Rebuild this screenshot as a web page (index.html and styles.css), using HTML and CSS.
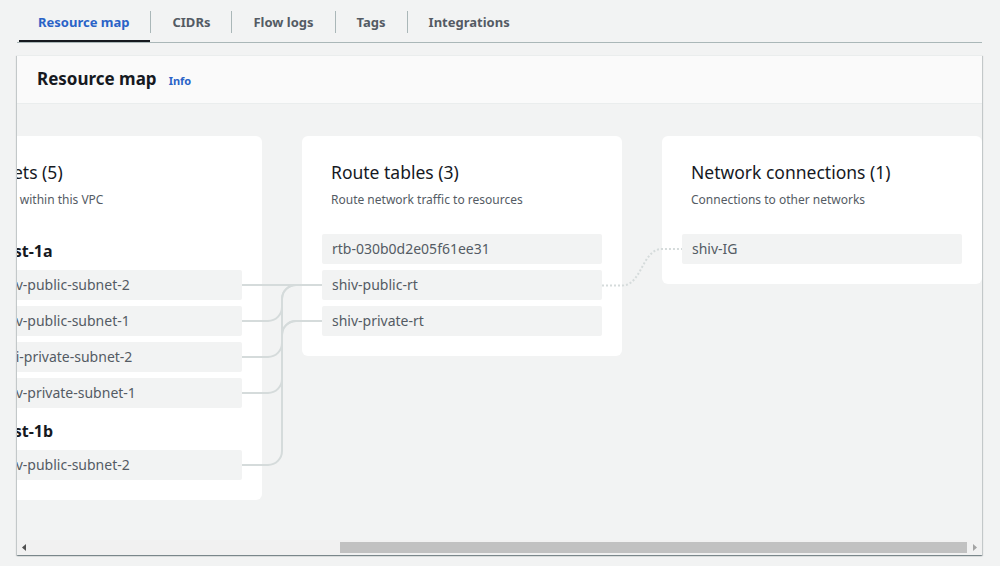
FILE: index.html
```html
<!DOCTYPE html>
<html lang="en">
<head>
<meta charset="utf-8">
<title>Resource map</title>
<link rel="stylesheet" href="styles.css">
</head>
<body>
  <nav class="tabs">
    <a class="tab active" href="#">Resource map</a>
    <a class="tab" href="#">CIDRs</a>
    <a class="tab" href="#">Flow logs</a>
    <a class="tab" href="#">Tags</a>
    <a class="tab" href="#">Integrations</a>
  </nav>

  <section class="container">
    <header class="container-header">
      <h2 class="container-title">Resource map</h2>
      <a class="info-link" href="#">Info</a>
    </header>

    <div class="map-scroll">
      <div class="map">
        <div class="card">
          <div class="card-head">
            <h3 class="card-title">VPC</h3>
            <p class="card-sub">Your AWS virtual network</p>
          </div>
          <div class="card-list">
            <div class="item">shiv-vpc</div>
          </div>
        </div>

        <div class="card">
          <div class="card-head">
            <h3 class="card-title">Subnets (5)</h3>
            <p class="card-sub">Subnets within this VPC</p>
          </div>
          <div class="card-list">
            <div class="az">us-east-1a</div>
            <div class="item">my-shiv-public-subnet-2</div>
            <div class="item">my-shiv-public-subnet-1</div>
            <div class="item">my-shii-private-subnet-2</div>
            <div class="item">my-shiv-private-subnet-1</div>
            <div class="az">us-east-1b</div>
            <div class="item">my-shiv-public-subnet-2</div>
          </div>
        </div>

        <div class="card">
          <div class="card-head">
            <h3 class="card-title">Route tables (3)</h3>
            <p class="card-sub">Route network traffic to resources</p>
          </div>
          <div class="card-list">
            <div class="item">rtb-030b0d2e05f61ee31</div>
            <div class="item">shiv-public-rt</div>
            <div class="item">shiv-private-rt</div>
          </div>
        </div>

        <div class="card">
          <div class="card-head">
            <h3 class="card-title">Network connections (1)</h3>
            <p class="card-sub">Connections to other networks</p>
          </div>
          <div class="card-list">
            <div class="item">shiv-IG</div>
          </div>
        </div>

        <svg class="links links-subnets" width="80" height="436" viewBox="0 0 80 436" aria-hidden="true">
          <g fill="none" stroke="#d5dbdb" stroke-width="2">
            <path d="M0 181 H80"/>
            <path d="M0 217 H26 A14 14 0 0 0 40 203 V195 A14 14 0 0 1 54 181 H80"/>
            <path d="M0 253 H26 A14 14 0 0 0 40 239 V231 A14 14 0 0 1 54 217 H80"/>
            <path d="M0 289 H26 A14 14 0 0 0 40 275 V231 A14 14 0 0 1 54 217 H80"/>
            <path d="M0 361 H26 A14 14 0 0 0 40 347 V195 A14 14 0 0 1 54 181 H80"/>
          </g>
        </svg>

        <svg class="links links-routes" width="80" height="436" viewBox="0 0 80 436" aria-hidden="true">
          <path d="M0 181.5 H20 C40 181.5 40 145 60 145 H80" fill="none" stroke="#d5dbdb" stroke-width="2" stroke-dasharray="2 2"/>
        </svg>
      </div>
    </div>

    <div class="hscroll" aria-hidden="true">
      <span class="hscroll-btn">
        <svg width="15" height="15" viewBox="0 0 15 15"><path d="M5 7.5 L9 4 V11 Z" fill="#505050"/></svg>
      </span>
      <div class="hscroll-track">
        <div class="hscroll-thumb" style="width: 67.06%"></div>
      </div>
      <span class="hscroll-btn">
        <svg width="15" height="15" viewBox="0 0 15 15"><path d="M10 7.5 L6 4 V11 Z" fill="#a3a3a3"/></svg>
      </span>
    </div>
  </section>
</body>
</html>
```

FILE: styles.css
```css
* {
  box-sizing: border-box;
}

html, body {
  margin: 0;
  background: #f2f3f3;
}

body {
  padding: 0 18px 0 17px;
  font-family: "Noto Sans", "Open Sans", Arial, sans-serif;
  color: #16191f;
  height: 566px;
  overflow: hidden;
}

/* Tabs */
.tabs {
  display: flex;
  height: 43px;
  border-bottom: 1px solid #aab7b8;
}

.tab {
  position: relative;
  display: block;
  padding: 12px 21px 10px;
  line-height: 20px;
  font-size: 13px;
  font-weight: 700;
  color: #545b64;
  text-decoration: none;
  white-space: nowrap;
}

.tab + .tab {
  margin-left: 1px;
}

.tab + .tab::before {
  content: "";
  position: absolute;
  left: -1px;
  top: 11px;
  height: 22px;
  width: 1px;
  background: #aab7b8;
}

.tab.active {
  color: #2a63c7;
}

.tab.active::after {
  content: "";
  position: absolute;
  left: 2px;
  right: 0;
  bottom: 0;
  height: 2px;
  background: #16191f;
}

/* Container */
.container {
  margin-top: 12px;
  background: #f2f3f3;
  border-top: 1px solid #eaeded;
  box-shadow: 0 1px 1px 0 rgba(0, 28, 36, 0.3),
              1px 1px 1px 0 rgba(0, 28, 36, 0.15),
              -1px 1px 1px 0 rgba(0, 28, 36, 0.15);
}

.container-header {
  display: flex;
  align-items: baseline;
  gap: 12px;
  padding: 12px 20px 13px;
  background: #fafafa;
  border-bottom: 1px solid #eaeded;
}

.container-title {
  margin: 0;
  font-size: 17px;
  line-height: 22px;
  font-weight: 700;
  color: #16191f;
}

.info-link {
  font-size: 11px;
  font-weight: 700;
  color: #2a63c7;
  text-decoration: none;
}

/* Map */
.map-scroll {
  overflow: hidden;
  direction: rtl;
}

.map {
  direction: ltr;
  position: relative;
  display: flex;
  align-items: flex-start;
  gap: 40px;
  width: 1440px;
  padding: 32px 0 40px 40px;
}

.card {
  flex: 0 0 320px;
  background: #ffffff;
  border-radius: 6px;
  padding: 25px 20px 20px;
}

.card-head {
  padding-left: 9px;
  margin-bottom: 26px;
}

.card-title {
  margin: 0;
  font-size: 17.5px;
  line-height: 22px;
  font-weight: 400;
  color: #16191f;
}

.card-sub {
  margin: 9px 0 0;
  font-size: 12px;
  line-height: 16px;
  color: #545b64;
}

.card-list {
  display: flex;
  flex-direction: column;
  gap: 6px;
}

.az {
  margin-top: 4px;
  padding-left: 9px;
  font-size: 16px;
  line-height: 26px;
  font-weight: 700;
  color: #16191f;
}

.item {
  height: 30px;
  line-height: 30px;
  padding: 0 10px;
  background: #f2f3f3;
  border-radius: 2px;
  font-size: 14px;
  color: #545b64;
  white-space: nowrap;
  overflow: hidden;
}

.links {
  position: absolute;
  top: 0;
}

.links-subnets {
  left: 700px;
}

.links-routes {
  left: 1060px;
}

/* Horizontal scrollbar */
.hscroll {
  display: flex;
  height: 15px;
  background: #f1f1f1;
}

.hscroll-btn {
  flex: 0 0 15px;
  display: block;
  height: 15px;
}

.hscroll-btn svg {
  display: block;
}

.hscroll-track {
  flex: 1;
  display: flex;
  justify-content: flex-end;
  padding: 2px 0;
}

.hscroll-thumb {
  height: 11px;
  background: #c1c1c1;
}
```
